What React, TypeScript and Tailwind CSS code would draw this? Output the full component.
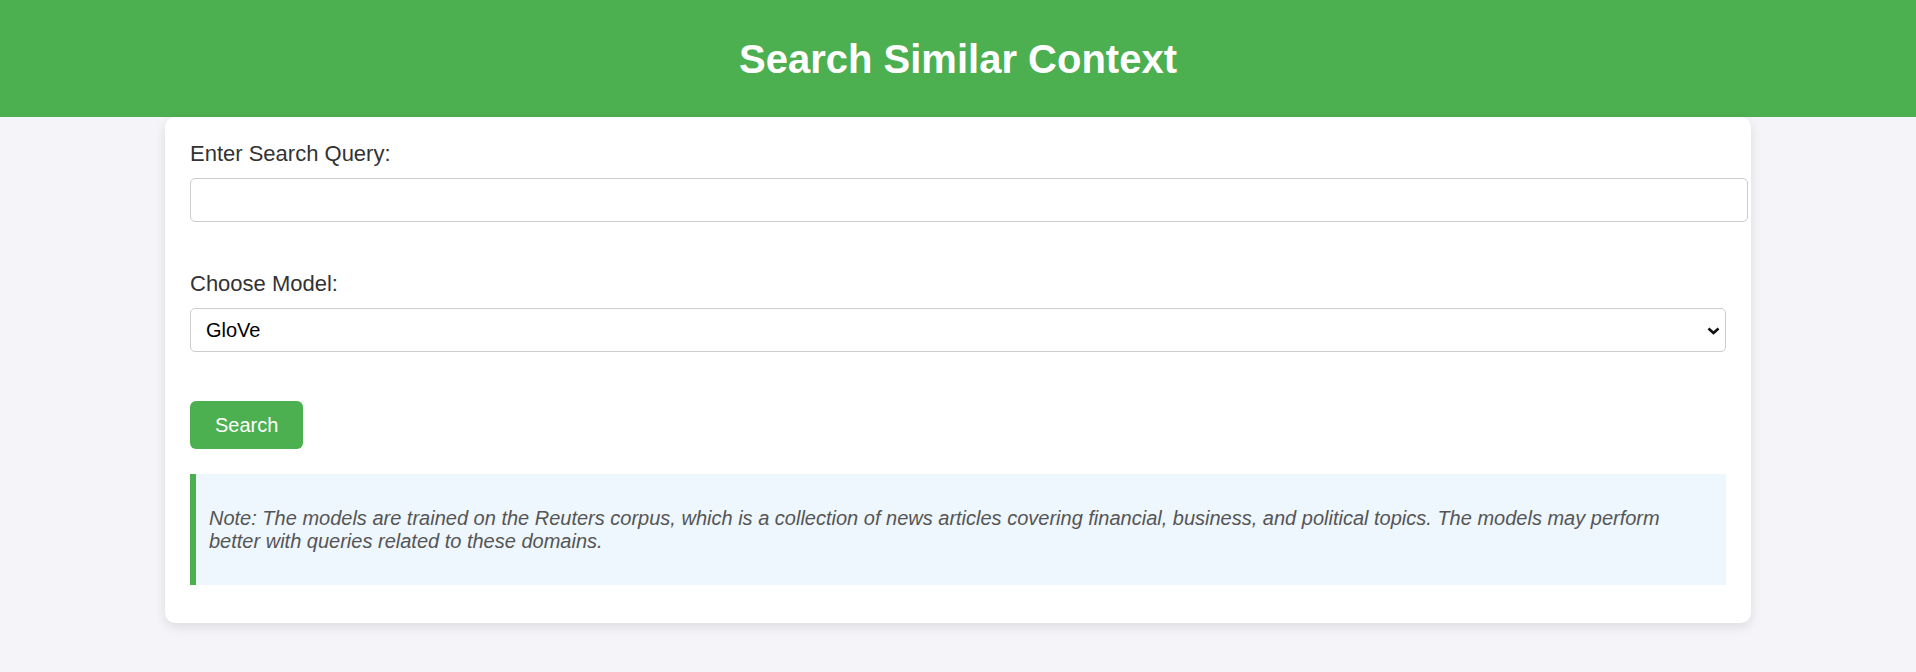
import { useState } from 'react';

const App = () => {
  const [query, setQuery] = useState('');
  const [model, setModel] = useState('glove');

  return (
    <div className="min-h-screen bg-[#f4f4f9] font-['Liberation_Sans',Arial,sans-serif]">
      {/* Header */}
      <header className="h-[117px] bg-[#4caf50] flex items-center justify-center">
        <h1 className="text-[40px] font-bold text-white leading-none">Search Similar Context</h1>
      </header>

      {/* Search card */}
      <div className="w-[1586px] mx-auto bg-white rounded-[10px] shadow-[0_4px_12px_rgba(0,0,0,0.1)] px-[25px] pt-[24px] pb-[38px]">
        <label className="block text-[22px] text-[#333] leading-[25px]">Enter Search Query:</label>
        <input
          type="text"
          value={query}
          onChange={(e) => setQuery(e.target.value)}
          className="mt-[12px] block w-[calc(100%+22px)] h-[44px] px-[11px] text-[20px] bg-white border border-[#ccc] rounded-[5px] outline-none"
        />

        <label className="block mt-[49px] text-[22px] text-[#333] leading-[25px]">Choose Model:</label>
        <div className="relative mt-[12px]">
          <select
            value={model}
            onChange={(e) => setModel(e.target.value)}
            className="block w-full h-[44px] pl-[15px] pr-[40px] appearance-none text-[20px] text-black bg-white border border-[#ccc] rounded-[5px] outline-none"
          >
            <option value="glove">GloVe</option>
            <option value="word2vec">Word2Vec</option>
            <option value="fasttext">FastText</option>
          </select>
          <svg
            className="absolute right-[6px] top-[19px] pointer-events-none"
            width="13"
            height="8"
            viewBox="0 0 13 8"
            fill="none"
          >
            <path d="M1.5 1.5 L6.5 6 L11.5 1.5" stroke="#111" strokeWidth="2.6" />
          </svg>
        </div>

        <button className="mt-[49px] h-[48px] px-[25px] bg-[#4caf50] text-white text-[20px] rounded-[6px]">
          Search
        </button>

        {/* Note */}
        <div className="mt-[25px] bg-[#eef6fe] border-l-[6px] border-[#4caf50] pl-[13px] pr-[15px] pt-[33px] pb-[32px]">
          <p className="italic text-[20px] leading-[23px] text-[#555]">
            Note: The models are trained on the Reuters corpus, which is a collection of news articles covering
            financial, business, and political topics. The models may perform better with queries related to these
            domains.
          </p>
        </div>
      </div>
    </div>
  );
};

export default App;
